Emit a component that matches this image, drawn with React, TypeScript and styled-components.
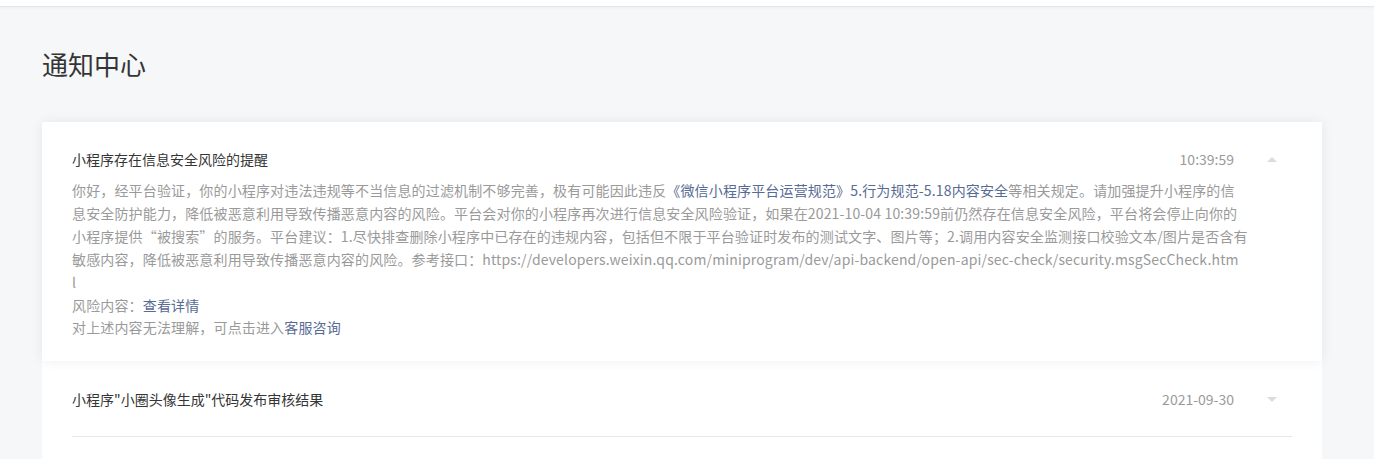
import React from 'react';
import styled, { createGlobalStyle } from 'styled-components';

const GlobalStyle = createGlobalStyle`
  html, body {
    margin: 0;
    padding: 0;
    background: #f6f7f9;
    font-family: "Noto Sans CJK SC", "Noto Sans", "Liberation Sans", sans-serif;
    -webkit-font-smoothing: antialiased;
  }
`;

const TopBar = styled.div`
  height: 6px;
  background: #fff;
  border-bottom: 1px solid #e4e5e7;
  box-shadow: 0 1px 3px rgba(0, 0, 0, 0.04);
`;

const Page = styled.div`
  padding: 0 52px 0 42px;
`;

const PageTitle = styled.h2`
  margin: 0;
  padding: 37px 0 38px;
  font-size: 26px;
  line-height: 40px;
  font-weight: 400;
  color: #353535;
`;

const List = styled.div`
  display: flex;
  flex-direction: column;
  background: #fff;
  padding-bottom: 40px;
`;

const Item = styled.div<{ $open?: boolean }>`
  position: relative;
  background: #fff;
  padding: ${p => (p.$open ? '25px 30px 23px' : '26px 30px 0')};
  box-shadow: ${p => (p.$open ? '0 0 12px rgba(0, 0, 0, 0.07)' : 'none')};
  z-index: ${p => (p.$open ? 1 : 0)};
`;

const Header = styled.div<{ $open?: boolean }>`
  display: flex;
  align-items: center;
  line-height: 24px;
  padding-bottom: ${p => (p.$open ? '8px' : '25px')};
  border-bottom: ${p => (p.$open ? 'none' : '1px solid #e7e7e7')};
`;

const Title = styled.div`
  flex: 1;
  font-size: 14px;
  color: #353535;
`;

const Time = styled.div`
  font-size: 14px;
  color: #9a9a9a;
`;

const Arrow = styled.div<{ $up?: boolean }>`
  width: 40px;
  margin-left: 18px;
  display: flex;
  justify-content: center;
  &::after {
    content: '';
    width: 0;
    height: 0;
    border-left: 5px solid transparent;
    border-right: 5px solid transparent;
    ${p => (p.$up ? 'border-bottom: 5px solid #dcdcdc;' : 'border-top: 5px solid #dcdcdc;')}
  }
`;

const Body = styled.div`
  padding-right: 50px;
  font-size: 14px;
  color: #9a9a9a;
  letter-spacing: 0.15px;
`;

const Line = styled.div<{ $compact?: boolean }>`
  line-height: ${p => (p.$compact ? '22px' : '23px')};
  white-space: nowrap;
`;

const Link = styled.a`
  color: #576b95;
  text-decoration: none;
  cursor: pointer;
`;

export default function App() {
  return (
    <>
      <GlobalStyle />
      <TopBar />
      <Page>
        <PageTitle>通知中心</PageTitle>
        <List>
          <Item $open>
            <Header $open>
              <Title>小程序存在信息安全风险的提醒</Title>
              <Time>10:39:59</Time>
              <Arrow $up />
            </Header>
            <Body>
              <Line>
                你好，经平台验证，你的小程序对违法违规等不当信息的过滤机制不够完善，极有可能因此违反
                <Link>《微信小程序平台运营规范》5.行为规范-5.18内容安全</Link>
                等相关规定。请加强提升小程序的信
              </Line>
              <Line>
                息安全防护能力，降低被恶意利用导致传播恶意内容的风险。平台会对你的小程序再次进行信息安全风险验证，如果在2021-10-04 10:39:59前仍然存在信息安全风险，平台将会停止向你的
              </Line>
              <Line>
                小程序提供“被搜索”的服务。平台建议：1.尽快排查删除小程序中已存在的违规内容，包括但不限于平台验证时发布的测试文字、图片等；2.调用内容安全监测接口校验文本/图片是否含有
              </Line>
              <Line>
                敏感内容，降低被恶意利用导致传播恶意内容的风险。参考接口：https://developers.weixin.qq.com/miniprogram/dev/api-backend/open-api/sec-check/security.msgSecCheck.htm
              </Line>
              <Line>l</Line>
              <Line $compact>
                风险内容：<Link>查看详情</Link>
              </Line>
              <Line $compact>
                对上述内容无法理解，可点击进入<Link>客服咨询</Link>
              </Line>
            </Body>
          </Item>
          <Item>
            <Header>
              <Title>小程序"小圈头像生成"代码发布审核结果</Title>
              <Time>2021-09-30</Time>
              <Arrow />
            </Header>
          </Item>
        </List>
      </Page>
    </>
  );
}
